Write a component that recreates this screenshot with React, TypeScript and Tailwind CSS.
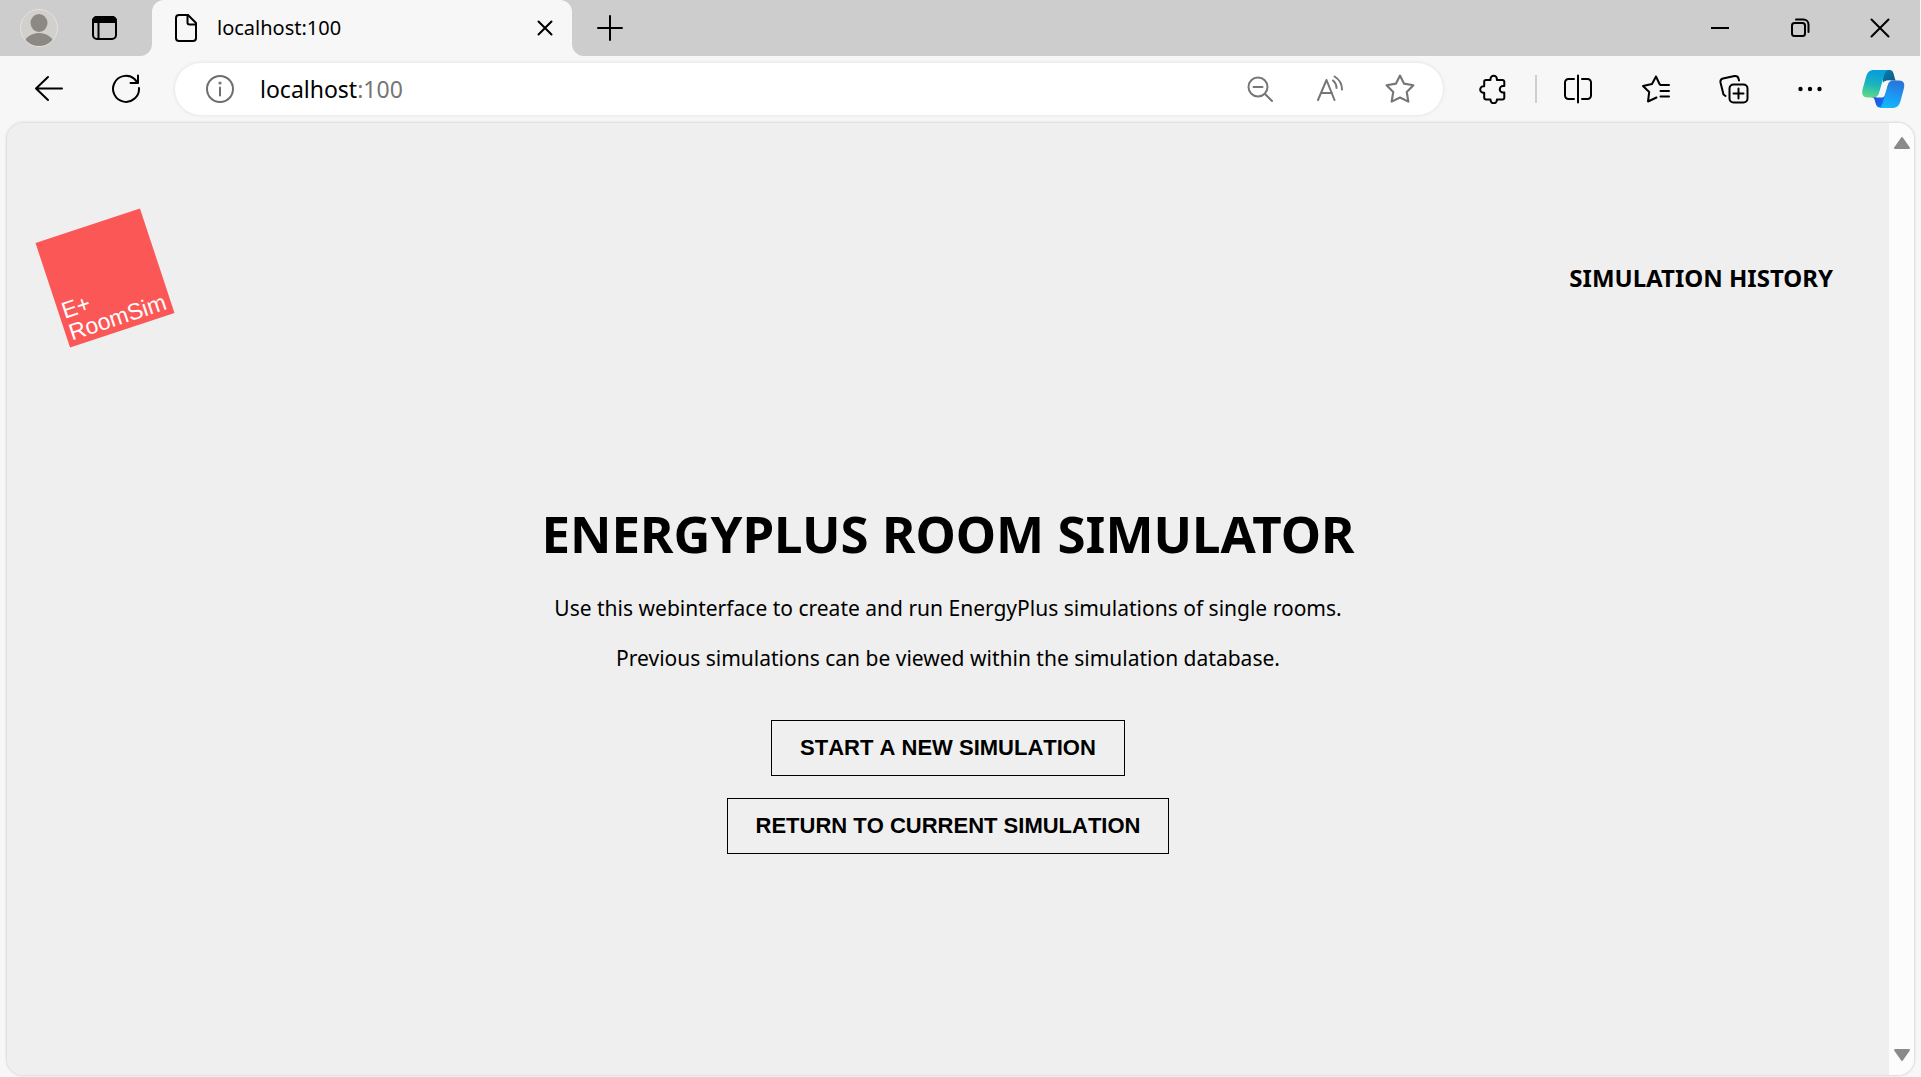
import React from "react";

type IconProps = { w: number; h: number; box?: string; sw?: number; children: React.ReactNode };

function Icon({ w, h, box, sw = 2, children }: IconProps) {
  return (
    <svg
      width={w}
      height={h}
      viewBox={box ?? `0 0 ${w} ${h}`}
      fill="none"
      stroke="currentColor"
      strokeWidth={sw}
      strokeLinecap="round"
      strokeLinejoin="round"
      aria-hidden="true"
      className="shrink-0"
    >
      {children}
    </svg>
  );
}

function IconButton({ label, className = "", children }: { label: string; className?: string; children: React.ReactNode }) {
  return (
    <button type="button" aria-label={label} className={`flex shrink-0 items-center justify-center ${className}`}>
      {children}
    </button>
  );
}

const STAR = "M14 1.5 17.8 9 26.5 10.500 20.300 16.800 21.800 25.800 14 21.900 6.200 25.800 7.700 16.800 1.500 10.500 10.200 9Z";

function TitleBar() {
  return (
    <div className="mr-px flex h-14 bg-[#cdcdcd]">
      <IconButton label="Profile" className="ml-5 w-[38px]">
        <svg width="38" height="40" viewBox="0 0 38 40" aria-hidden="true">
          <defs>
            <clipPath id="avatar">
              <circle cx="19" cy="20" r="18" />
            </clipPath>
          </defs>
          <circle cx="19" cy="20" r="18.5" fill="#d2d0cd" stroke="#e3e2de" />
          <g fill="#8c8884" clipPath="url(#avatar)">
            <ellipse cx="19" cy="15" rx="8.500" ry="9" />
            <ellipse cx="19" cy="37" rx="15" ry="12" />
          </g>
        </svg>
      </IconButton>
      <IconButton label="Tab actions" className="ml-8 w-7">
        <Icon w={28} h={28}>
          <rect x="3" y="3" width="23" height="22" rx="4" />
          <path d="M3 8V7a4 4 0 0 1 4-4h15a4 4 0 0 1 4 4v1Z" fill="currentColor" />
          <path d="M8.500 9v16" />
        </Icon>
      </IconButton>
      <div className="ml-[22px] flex items-end">
        <svg width="12" height="12" aria-hidden="true">
          <path d="M12 0v12H0A12 12 0 0 0 12 0Z" fill="#f7f7f7" />
        </svg>
        <div className="flex h-14 w-[420px] items-center rounded-t-xl bg-[#f7f7f7] pr-[13px] pl-5">
          <Icon w={28} h={32}>
            <path d="M7 3h9l8 8v15a3 3 0 0 1-3 3H7a3 3 0 0 1-3-3V6a3 3 0 0 1 3-3Z" />
            <path d="M15.500 3v7.500a2 2 0 0 0 2 2H24" />
          </Icon>
          <span className="ml-[17px] grow text-[20px] leading-7">localhost:100</span>
          <IconButton label="Close tab" className="size-7">
            <Icon w={16} h={16}>
              <path d="M1.500 1.500l13 13M14.500 1.500l-13 13" />
            </Icon>
          </IconButton>
        </div>
        <svg width="12" height="12" aria-hidden="true">
          <path d="M0 0v12h12A12 12 0 0 1 0 0Z" fill="#f7f7f7" />
        </svg>
      </div>
      <IconButton label="New tab" className="ml-3 w-7">
        <Icon w={26} h={26}>
          <path d="M13 1v24M1 13h24" />
        </Icon>
      </IconButton>
      <div className="ml-auto flex">
        <IconButton label="Minimize" className="w-20">
          <Icon w={18} h={18}>
            <path d="M0 9h18" strokeLinecap="butt" />
          </Icon>
        </IconButton>
        <IconButton label="Restore" className="w-20">
          <Icon w={20} h={20}>
            <rect x="2" y="5" width="13" height="13" rx="2.500" />
            <path d="M6 1.500h7.500a5 5 0 0 1 5 5V14" />
          </Icon>
        </IconButton>
        <IconButton label="Close" className="w-20">
          <Icon w={20} h={20}>
            <path d="M1.500 1.500l17 17M18.500 1.500l-17 17" />
          </Icon>
        </IconButton>
      </div>
    </div>
  );
}

function Copilot() {
  return (
    <svg width="44" height="40" viewBox="0 0 44 40" aria-hidden="true">
      <defs>
        <linearGradient id="cpA" x1="0.400" y1="0" x2="0.200" y2="1">
          <stop offset="0.100" stopColor="#0a9fd8" />
          <stop offset="0.500" stopColor="#1bb5bd" />
          <stop offset="1" stopColor="#5fdc84" />
        </linearGradient>
        <linearGradient id="cpB" x1="0.700" y1="0" x2="0.400" y2="1">
          <stop offset="0" stopColor="#2a72d8" />
          <stop offset="0.600" stopColor="#1a9cf5" />
          <stop offset="1" stopColor="#14b8fa" />
        </linearGradient>
        <linearGradient id="cpC" x1="0" y1="0" x2="1" y2="1">
          <stop offset="0" stopColor="#0a7fae" />
          <stop offset="1" stopColor="#0d4f80" />
        </linearGradient>
        <linearGradient id="cpD" x1="0" y1="0" x2="1" y2="0.600">
          <stop offset="0" stopColor="#1f3fd8" />
          <stop offset="1" stopColor="#1777ea" />
        </linearGradient>
      </defs>
      <path d="M22 1h6.500c2.500 0 3.500 1.500 4.200 4l1.300 5c.4 1 1 1.500 2 1.500H27c-3 0-4 1.500-5 4Z" fill="url(#cpC)" />
      <path d="M10 28h10c3 0 4-2 5-5l2 6-3 9.500h-4.500c-3 0-4-1.500-4.800-4l-1.200-4c-.5-1.300-1.500-2.500-3.500-2.500Z" fill="url(#cpD)" />
      <path d="M13 1h15c-2.500 0-4 2-4.800 5l-5 17.500c-1 3.500-2.500 5-5.700 5H6.500c-4.500 0-6-3.500-5-8L5 8c1.300-4.500 3.500-7 8-7Z" fill="url(#cpA)" />
      <path d="M31 39H17c2.500 0 3.700-1.800 4.500-4.500l5-18c1-3.500 2.500-5 5.500-5h6c4.500 0 6 3 5 7.500L39.500 32c-1.300 4.500-3.500 7-8.500 7Z" fill="url(#cpB)" />
      <path d="M28 11.500h3c-2.500.5-3.800 2-4.600 4.500l-3 10.500c-.5 1.500-1.500 2-3 2H14c2.300-.5 3.500-2 4.300-4.500l3.200-9.500c.9-2 2.500-3 6.500-3Z" fill="#f7f7f7" />
    </svg>
  );
}

function Toolbar() {
  return (
    <div className="flex h-[66px] items-center bg-[#f7f7f7] pr-4 pl-[31px]">
      <IconButton label="Back" className="size-9">
        <Icon w={30} h={28}>
          <path d="M28 13.500H2M14 2 2 13.500 14 25" />
        </Icon>
      </IconButton>
      <IconButton label="Refresh" className="ml-[41px] size-9">
        <Icon w={30} h={30}>
          <path d="M28 14A13 13 0 1 1 23.500 5L26.500 8.500" />
          <path d="M27 1.500V9H19.500" />
        </Icon>
      </IconButton>
      <div className="ml-[31px] flex h-[52px] grow items-center rounded-full bg-white pr-7 pl-[30px] shadow-[0_0_4px_rgba(0,0,0,0.10)]">
        <IconButton label="Site information" className="size-[30px] text-[#6e6e6e]">
          <Icon w={30} h={30}>
            <circle cx="15" cy="15" r="13" />
            <path d="M15 13.500v8" />
            <circle cx="15" cy="9" r="0.600" fill="currentColor" />
          </Icon>
        </IconButton>
        <label htmlFor="address" className="ml-[25px] flex grow items-center text-[23px] leading-8">
          <span>localhost</span>
          <span className="text-[#767676]">:100</span>
          <input id="address" aria-label="Address" className="h-8 w-0 grow bg-transparent outline-none" />
        </label>
        <div className="flex items-center gap-10 text-[#767676]">
          <IconButton label="Zoom out" className="size-[30px]">
            <Icon w={28} h={28}>
              <circle cx="12" cy="12" r="9.500" />
              <path d="M19 19l7 7M7.500 12h9" />
            </Icon>
          </IconButton>
          <IconButton label="Read aloud" className="size-[30px]">
            <Icon w={28} h={28}>
              <path d="M2 25 10.500 5 18.500 25M5 18h11" />
              <path d="M17 5.500c2.300 2 3.500 4.800 3.500 7.500M18.500 1.500c5 3 7.500 7.500 7.500 13" />
            </Icon>
          </IconButton>
          <IconButton label="Add to favorites" className="size-[30px]">
            <Icon w={30} h={30} box="0 0 28 28">
              <path d={STAR} />
            </Icon>
          </IconButton>
        </div>
      </div>
      <IconButton label="Extensions" className="ml-[35px] size-[30px]">
        <Icon w={30} h={30}>
          <path d="M8 6h4.500V5a3.200 3.200 0 0 1 6.400 0V6H24.500a1.800 1.800 0 0 1 1.800 1.800V12H25a3 3 0 0 0 0 6.500h1.300v5.200a1.800 1.800 0 0 1-1.800 1.800h-5.600v.500a3.200 3.200 0 0 1-6.400 0V25.500H8a1.800 1.800 0 0 1-1.800-1.800V18.800H5.500a3.300 3.300 0 0 1 0-6.600h.700V7.800A1.800 1.800 0 0 1 8 6Z" />
        </Icon>
      </IconButton>
      <div className="ml-[27px] h-7 w-0.5 bg-[#cfcfcf]" />
      <IconButton label="Split screen" className="ml-[26px] size-[30px]">
        <Icon w={30} h={30}>
          <path d="M15 1.500v27M11 5H5.500A3.500 3.500 0 0 0 2 8.500v13A3.500 3.500 0 0 0 5.500 25H11M19 5h5.500A3.500 3.500 0 0 1 28 8.500v13a3.500 3.500 0 0 1-3.500 3.500H19" />
        </Icon>
      </IconButton>
      <IconButton label="Favorites" className="ml-[48px] size-[30px]">
        <Icon w={30} h={30}>
          <path d="M28 11H19.500L18.500 10 15 2.500 11 10 2 12 8.200 18 7 27.500 15.500 23.500M19.500 17H28M19.500 22.500H28" />
        </Icon>
      </IconButton>
      <IconButton label="Collections" className="ml-[48px] size-[30px]">
        <Icon w={30} h={30}>
          <rect x="10.500" y="10.500" width="18" height="18" rx="4" />
          <path d="M19.500 14.500v10M14.500 19.500h10M20 6.500l-.500-2A3.500 3.500 0 0 0 15.500 2L4 4.500A3.500 3.500 0 0 0 1.500 8.500l3 12 2 1.500" />
        </Icon>
      </IconButton>
      <IconButton label="Settings and more" className="ml-[46px] size-[30px]">
        <Icon w={28} h={28}>
          <g fill="currentColor" stroke="none">
            <circle cx="4.500" cy="14" r="2.200" />
            <circle cx="14" cy="14" r="2.200" />
            <circle cx="23.500" cy="14" r="2.200" />
          </g>
        </Icon>
      </IconButton>
      <IconButton label="Copilot" className="ml-9 w-[44px]">
        <Copilot />
      </IconButton>
    </div>
  );
}

function Logo() {
  return (
    <svg width="140" height="140" viewBox="-70 -70 140 140" role="img" aria-label="E+ RoomSim">
      <g transform="rotate(-18.300)">
        <rect x="-55" y="-55" width="110" height="110" fill="#fc5757" />
        <g fill="#fff" fontSize="23" fontFamily="'Liberation Sans', Arial, sans-serif">
          <text x="-51" y="26">E+</text>
          <text x="-51" y="49">RoomSim</text>
        </g>
      </g>
    </svg>
  );
}

const actionClass =
  "h-14 border border-black px-7 font-['Liberation_Sans',Arial,sans-serif] text-[22px] leading-7 font-bold [font-kerning:none]";

function Page() {
  return (
    <main className="flex grow flex-col bg-[#efefef] font-['Noto_Sans',sans-serif]">
      <header className="flex items-center justify-between pt-[85px] pr-14 pl-7">
        <Logo />
        <a href="#history" className="text-[24px] leading-8 font-bold">
          SIMULATION HISTORY
        </a>
      </header>
      <section className="mt-[151px] flex flex-col items-center text-center">
        <h1 className="text-[51px] leading-[68px] font-bold">ENERGYPLUS ROOM SIMULATOR</h1>
        <p className="mt-[25px] text-[21px] leading-8">
          Use this webinterface to create and run EnergyPlus simulations of single rooms.
        </p>
        <p className="mt-[18px] text-[21px] leading-8">
          Previous simulations can be viewed within the simulation database.
        </p>
        <button type="button" className={`mt-[46px] ${actionClass}`}>START A NEW SIMULATION</button>
        <button type="button" className={`mt-[22px] ${actionClass}`}>RETURN TO CURRENT SIMULATION</button>
      </section>
    </main>
  );
}

function ScrollBar() {
  return (
    <div className="flex w-[25px] shrink-0 flex-col items-center justify-between bg-[#fcfcfc] py-[13px] text-[#8a8a8a]">
      <Icon w={18} h={14}>
        <path d="M9 2 2 12h14Z" fill="currentColor" />
      </Icon>
      <Icon w={18} h={14}>
        <path d="M9 12 2 2h14Z" fill="currentColor" />
      </Icon>
    </div>
  );
}

export default function App() {
  return (
    <div className="flex min-h-screen flex-col bg-[#f7f7f7] font-['Noto_Sans',sans-serif] text-black">
      <TitleBar />
      <Toolbar />
      <div className="mx-[7px] mt-px mb-0.5 flex grow overflow-hidden rounded-2xl shadow-[0_0_3px_rgba(0,0,0,0.25)]">
        <Page />
        <ScrollBar />
      </div>
    </div>
  );
}
